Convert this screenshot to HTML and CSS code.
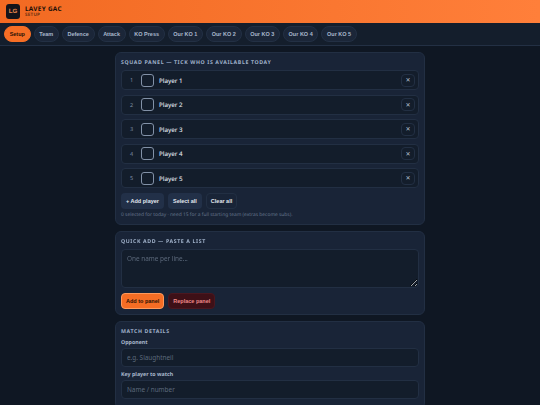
FILE: index.html
```html
<!DOCTYPE html>
<html lang="en">
<head>
<meta charset="utf-8">
<title>Lavey GAC</title>
<link rel="stylesheet" href="styles.css">
</head>
<body>
<header class="top">
  <div class="logo">LG</div>
  <div class="brand"><div class="name">LAVEY GAC</div><div class="sub">SETUP</div></div>
</header>
<nav class="tabs">
  <button class="tab on">Setup</button><button class="tab">Team</button><button class="tab">Defence</button><button class="tab">Attack</button><button class="tab">KO Press</button><button class="tab">Our KO 1</button><button class="tab">Our KO 2</button><button class="tab">Our KO 3</button><button class="tab">Our KO 4</button><button class="tab">Our KO 5</button>
</nav>
<main class="wrap">
  <section class="panel">
    <h2>SQUAD PANEL — TICK WHO IS AVAILABLE TODAY</h2>
    <div class="rows">
      <div class="row"><span class="num">1</span><span class="box"></span><span class="pname">Player 1</span><span class="x">✕</span></div>
      <div class="row"><span class="num">2</span><span class="box"></span><span class="pname">Player 2</span><span class="x">✕</span></div>
      <div class="row"><span class="num">3</span><span class="box"></span><span class="pname">Player 3</span><span class="x">✕</span></div>
      <div class="row"><span class="num">4</span><span class="box"></span><span class="pname">Player 4</span><span class="x">✕</span></div>
      <div class="row"><span class="num">5</span><span class="box"></span><span class="pname">Player 5</span><span class="x">✕</span></div>
    </div>
    <div class="btns">
      <button class="btn blue">+ Add player</button><button class="btn blue">Select all</button><button class="btn ghost">Clear all</button>
    </div>
    <p class="hint">0 selected for today · need 15 for a full starting team (extras become subs).</p>
  </section>
  <section class="panel">
    <h2>QUICK ADD — PASTE A LIST</h2>
    <textarea class="area" placeholder="One name per line..."></textarea>
    <div class="btns">
      <button class="btn orange">Add to panel</button><button class="btn danger">Replace panel</button>
    </div>
  </section>
  <section class="panel">
    <h2>MATCH DETAILS</h2>
    <label class="lab">Opponent</label>
    <input class="inp" placeholder="e.g. Slaughtneil">
    <label class="lab">Key player to watch</label>
    <input class="inp" placeholder="Name / number">
  </section>
</main>
</body>
</html>
```
FILE: styles.css
```css
* { box-sizing: border-box; }
html, body { margin: 0; height: 405px; overflow: hidden; }
body { background: #0f1723; color: #e2e8f0; font-family: "Noto Sans", sans-serif; text-rendering: geometricPrecision; }
.top { height: 23px; display: flex; align-items: center; gap: 5px; padding: 0 6px; background: linear-gradient(90deg, #f26a22, #ff7f3a); box-shadow: 0 1px 0 #9a5a3a; position: relative; opacity: .999; }
.logo { width: 14px; height: 15px; border-radius: 3px; background: #14141a; color: #e8874c; font: 700 6.2px "Liberation Sans", sans-serif; display: flex; align-items: center; justify-content: center; }
.name { font-size: 6.4px; font-weight: 700; letter-spacing: .3px; line-height: 7.5px; color: #1a0f08; }
.sub { font-size: 4.5px; line-height: 5px; letter-spacing: .3px; color: #5a2a10; font-weight: 600; }
.tabs { height: 23px; display: flex; align-items: center; gap: 3px; padding: 0 4px; background: #141e2c; border-bottom: 1px solid #233044; opacity: .999; }
.tab { height: 16px; padding: 0 4.65px; border-radius: 8px; border: 1px solid #233044; background: #1b2638; color: #a9b8cc; font: 700 5.5px "Liberation Sans", sans-serif; white-space: nowrap; }
.tab.on { background: #f66e25; border-color: #f66e25; color: #2a1206; }
.wrap { width: 310px; margin: 6px auto 0; display: flex; flex-direction: column; gap: 6px; opacity: .999; }
.panel { background: #1a2538; border: 1px solid #233044; border-radius: 6px; padding: 5px 5px 5px; }
h2 { margin: 0 0 4px; font-size: 5.25px; line-height: 8px; font-weight: 700; letter-spacing: .6px; color: #9fb0c8; }
.rows { display: flex; flex-direction: column; gap: 4.5px; }
.row { height: 20px; display: flex; align-items: center; background: #141e2c; border: 1px solid #233044; border-radius: 4px; padding: 0 3px 0 8px; }
.num { width: 8px; font-size: 5.5px; color: #8090a6; }
.box { width: 13px; height: 13px; margin-left: 3px; border: 1px solid #8392a8; border-radius: 3px; }
.pname { flex: 1; margin-left: 5px; font-size: 6.2px; font-weight: 500; color: #e2e8f0; }
.x { width: 14px; height: 13px; border: 1px solid #233044; border-radius: 4px; font-size: 6px; color: #b4c0d0; display: flex; align-items: center; justify-content: center; }
.btns { display: flex; gap: 4px; margin-top: 5px; }
.btn { height: 16px; padding: 0 4px; border-radius: 4px; font: 700 5.5px "Liberation Sans", sans-serif; border: 1px solid transparent; color: #e2e8f0; white-space: nowrap; }
.btn.blue { background: #233149; }
.btn.ghost { background: transparent; border-color: #233044; }
.btn.orange { background: #f66e25; border-color: #ff9a5c; color: #2a1206; }
.btn.danger { background: #3f1118; border-color: #4c1820; color: #f08a8a; }
.hint { margin: 3px 0 0; font-size: 4.9px; line-height: 7px; color: #66758c; }
.area { display: block; width: 100%; height: 39px; background: #141e2c; border: 1px solid #233044; border-radius: 4px; padding: 4px 5px; font: 6.4px "Noto Sans", sans-serif; color: #e2e8f0; }
.area::placeholder, .inp::placeholder { color: #5d6a7c; opacity: 1; }
.lab { display: block; font-size: 5.3px; line-height: 7px; font-weight: 700; color: #a9b8cc; margin: 0 0 2px; }
.inp { display: block; width: 100%; height: 19px; background: #141e2c; border: 1px solid #233044; border-radius: 4px; padding: 0 5px; font: 6.4px "Noto Sans", sans-serif; color: #e2e8f0; outline: 0; margin-bottom: 4px; }
```
